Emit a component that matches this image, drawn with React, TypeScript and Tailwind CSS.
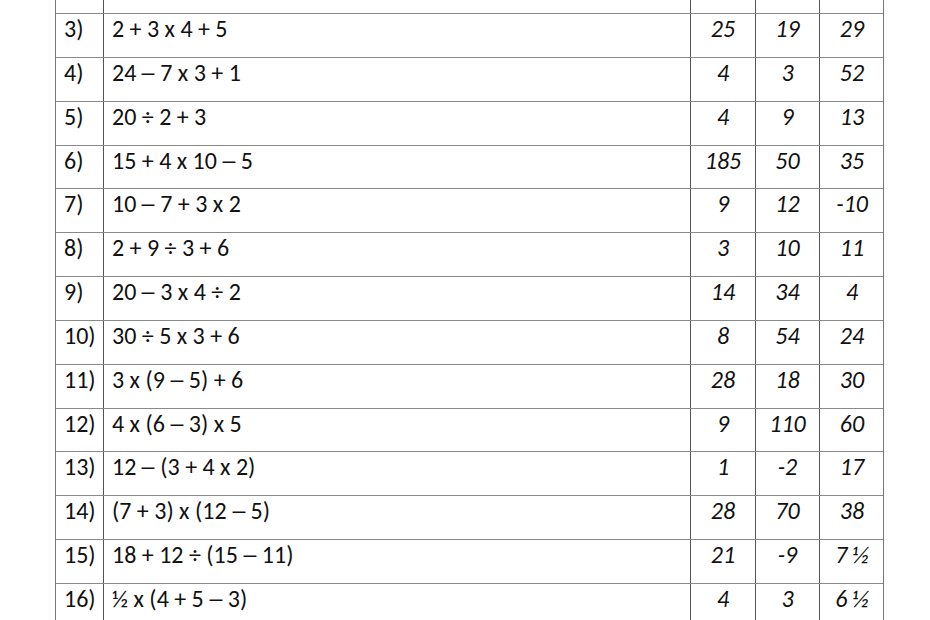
const rows: [string, string, string, string, string][] = [
  ["3)", "2 + 3 x 4 + 5", "25", "19", "29"],
  ["4)", "24 – 7 x 3 + 1", "4", "3", "52"],
  ["5)", "20 ÷ 2 + 3", "4", "9", "13"],
  ["6)", "15 + 4 x 10 – 5", "185", "50", "35"],
  ["7)", "10 – 7 + 3 x 2", "9", "12", "-10"],
  ["8)", "2 + 9 ÷ 3 + 6", "3", "10", "11"],
  ["9)", "20 – 3 x 4 ÷ 2", "14", "34", "4"],
  ["10)", "30 ÷ 5 x 3 + 6", "8", "54", "24"],
  ["11)", "3 x (9 – 5) + 6", "28", "18", "30"],
  ["12)", "4 x (6 – 3) x 5", "9", "110", "60"],
  ["13)", "12 – (3 + 4 x 2)", "1", "-2", "17"],
  ["14)", "(7 + 3) x (12 – 5)", "28", "70", "38"],
  ["15)", "18 + 12 ÷ (15 – 11)", "21", "-9", "7 ½"],
  ["16)", "½ x (4 + 5 – 3)", "4", "3", "6 ½"],
];

const grid = "grid grid-cols-[48px_587px_65px_64px_64px]";

// the worksheet font draws its en dash wider than ours, so stretch it a bit
// (margins keep the stretched glyph inside its own box)
function Expr({ text }: { text: string }) {
  const parts = text.split(" – ");
  return (
    <>
      {parts.map((p, i) => (
        <span key={i}>
          {p}
          {i < parts.length - 1 && (
            <span className="mx-[5px] inline-block origin-center scale-x-[1.5] px-[1px]">–</span>
          )}
        </span>
      ))}
    </>
  );
}

export default function App() {
  return (
    <div className="h-[620px] w-[930px] overflow-hidden bg-white text-[#111] [font-family:Carlito,'Open_Sans',sans-serif]">
      <div className="ml-[55px] w-[829px] border-l border-r border-[#777]">
        <div className={`${grid} h-[13px]`}>
          <div className="border-r border-[#555]" />
          <div className="border-r border-[#555]" />
          <div className="border-r border-[#555]" />
          <div className="border-r border-[#555]" />
          <div />
        </div>
        {rows.map(([n, expr, a, b, c]) => (
          <div key={n} className={`${grid} h-[43.85px] border-t border-[#8a8a8a] text-[24px] leading-none`}>
            <div className="border-r border-[#555] pl-[8px] pt-[3px]">{n}</div>
            <div className="whitespace-pre border-r border-[#555] pl-[8px] pt-[3px]">
              <Expr text={expr} />
            </div>
            <div className="border-r border-[#555] pt-[3px] text-center italic">{a}</div>
            <div className="border-r border-[#555] pt-[3px] text-center italic">{b}</div>
            <div className="pt-[3px] text-center italic">{c}</div>
          </div>
        ))}
      </div>
    </div>
  );
}
